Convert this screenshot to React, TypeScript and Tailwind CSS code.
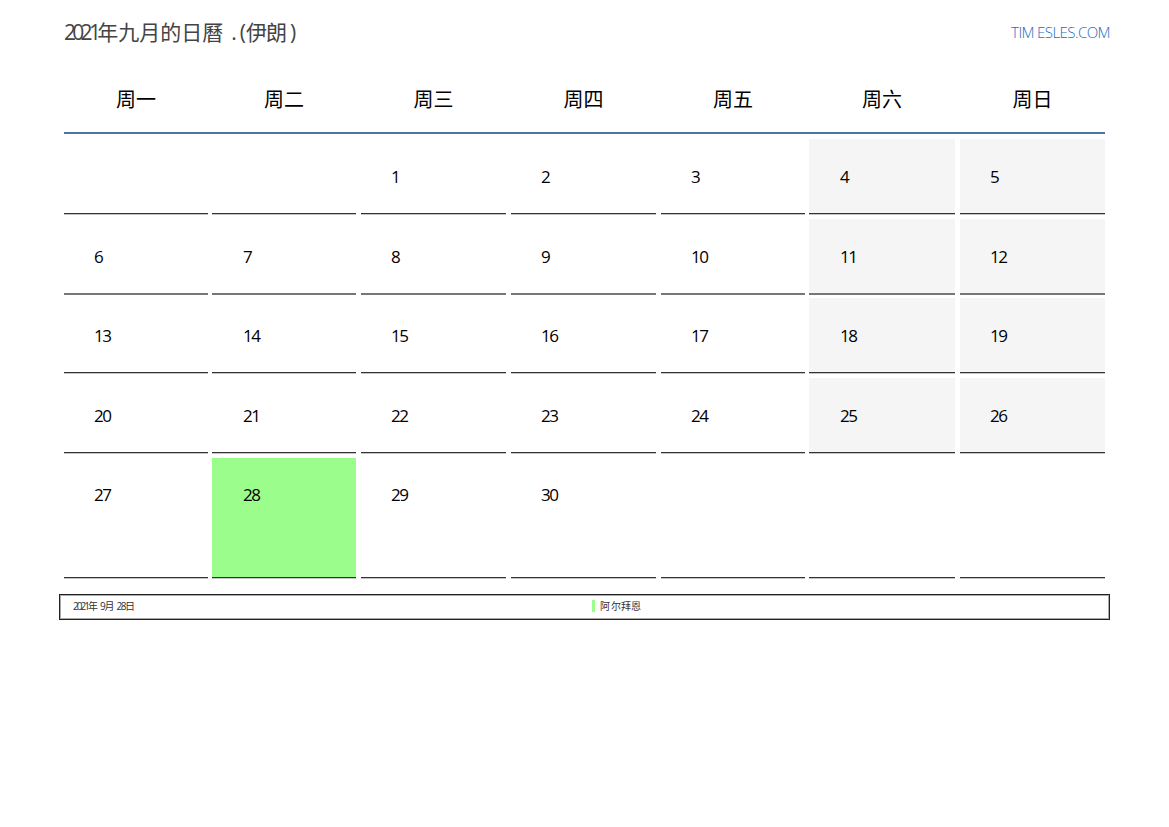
const font = "font-['Open_Sans','Noto_Sans_CJK_SC',sans-serif]";

const weekdays = ['周一', '周二', '周三', '周四', '周五', '周六', '周日'];

// gaps between the columns are not even in the original
const offsets = ['', 'ml-[4px]', 'ml-[5px]', 'ml-[5px]', 'ml-[5px]', 'ml-[4px]', 'ml-[5px]'];

const rows: (number | null)[][] = [
  [null, null, 1, 2, 3, 4, 5],
  [6, 7, 8, 9, 10, 11, 12],
  [13, 14, 15, 16, 17, 18, 19],
  [20, 21, 22, 23, 24, 25, 26],
  [27, 28, 29, 30, null, null, null],
];

const rowLine = [
  'bg-[#333] border-b border-[#c4c4c4]',
  'bg-[#777]',
  'bg-[#333] border-b border-[#c4c4c4]',
  'bg-[#333] border-b border-[#c4c4c4]',
  'bg-[#333] border-b border-[#c4c4c4]',
];
const rowGap = ['mb-[4px]', 'mb-[3px]', 'mb-[4px]', 'mb-[4px]', ''];

const colTemplate = 'grid grid-cols-[144px_148px_150px_150px_149px_150px_150px] w-[1041px]';

function DayCell({ day, col, row }: { day: number | null; col: number; row: number }) {
  const weekend = col >= 5 && day !== null;
  const today = day === 28;
  return (
    <div className={offsets[col]}>
      <div
        className={`${row === 4 ? 'h-[119px] pt-[25px]' : 'h-[74px] pt-[26px]'} ${
          col === 1 || col === 5 ? 'pl-[31px]' : 'pl-[30px]'
        } text-[17px] leading-[24px] tracking-[-1.5px] text-black ${
          today ? 'bg-[#9bfd8b]' : weekend ? 'bg-[#f5f5f5]' : ''
        }`}>
        {day}
      </div>
      <div className={`h-[2px] ${rowLine[row]}`} />
    </div>
  );
}

export default function App() {
  return (
    <div className={`${font} w-[1169px] h-[827px] bg-white relative`}>
      <div className="flex items-start justify-between pl-[64px] pr-[59px] pt-[17px] h-[64px]">
        <h1 className="text-[21px] leading-[30px] font-normal text-[#444]">
          <span className="tracking-[-3.7px]">2021</span>年九月的日曆
          <span className="ml-[8px]">.</span>
          <span className="ml-[3px]">(</span>
          <span className="tracking-[-1px]">伊朗</span>
          <span className="ml-[4px]">)</span>
        </h1>
        <a className="text-[15px] leading-[30px] font-light text-[#1a6cc0] tracking-[-0.55px]">
          TIM<span className="ml-[3px]">ESLES.COM</span>
        </a>
      </div>

      <div className="pl-[64px]">
        <div className={colTemplate}>
          {weekdays.map((w, i) => (
            <div key={w} className={`${offsets[i]} h-[68px] pt-[4px] flex items-center justify-center text-[20px] font-normal text-black`}>
              {w}
            </div>
          ))}
        </div>
        <div className="w-[1041px] h-[2px] bg-[#4f74a3] mb-[5px]" />

        <div className="flex flex-col">
          {rows.map((row, r) => (
            <div key={r} className={`${colTemplate} ${rowGap[r]}`}>
              {row.map((d, c) => (
                <DayCell key={c} day={d} col={c} row={r} />
              ))}
            </div>
          ))}
        </div>
      </div>

      <div className="mt-[15px] ml-[59px] w-[1051px] h-[26px] pb-[2px] border border-[#222] shadow-[inset_0_0_0_1px_#aaa] flex items-center text-[10px] text-[#333]">
        <div className="w-[532px] pl-[13px]">
          <span className="tracking-[-2px]">2021</span>年<span className="ml-[2px] tracking-[-1px]">9</span>月
          <span className="ml-[2px] tracking-[-1.5px]">28</span>日
        </div>
        <div className="flex items-center gap-[5px]">
          <span className="w-[3px] h-[12px] bg-[#9bfd8b]" />
          <span>阿<span className="ml-[1px]">尔拜恩</span></span>
        </div>
      </div>
    </div>
  );
}
